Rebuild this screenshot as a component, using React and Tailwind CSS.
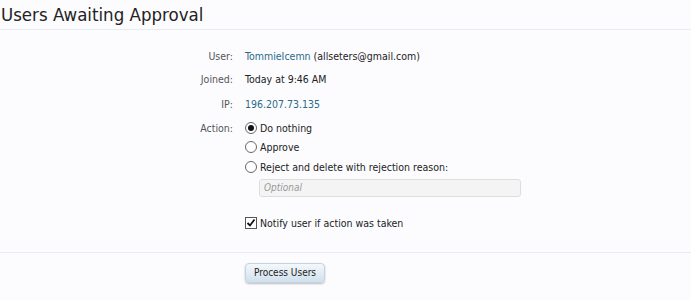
const font = { fontFamily: '"DejaVu Sans Condensed", "Liberation Sans", sans-serif' };

const Row = ({ label, children, className = "" }) => (
  <div className={`flex items-start ${className}`}>
    <div className="w-[245px] shrink-0 text-right pr-[12px] text-[#555]">{label}</div>
    <div className="flex-1 text-[#222]">{children}</div>
  </div>
);

const Radio = ({ checked }) => (
  <span className="inline-flex w-[12px] h-[12px] rounded-full border border-[#666] bg-white items-center justify-center mr-[3px] shrink-0">
    {checked && <span className="w-[6px] h-[6px] rounded-full bg-[#111]" />}
  </span>
);

export default function App() {
  return (
    <div className="w-[691px] h-[300px] bg-[#fcfcff] overflow-hidden text-[10.5px] leading-[14px]" style={font}>
      <h1 className="text-[18.5px] leading-[28px] text-[#222] pl-[1px] pt-[1px] border-b border-[#e6ecf2]">
        Users Awaiting Approval
      </h1>

      <div className="pt-[19px]">
        <Row label="User:">
          <span className="text-[#2b6a87]">TommieIcemn</span> (allseters@gmail.com)
        </Row>
        <Row label="Joined:" className="mt-[9px]">Today at 9:46 AM</Row>
        <Row label="IP:" className="mt-[11px]">
          <span className="text-[#2b6a87]">196.207.73.135</span>
        </Row>
        <Row label="Action:" className="mt-[10px]">
          <div className="flex flex-col">
            <label className="flex items-center h-[14px]"><Radio checked />Do nothing</label>
            <label className="flex items-center h-[14px] mt-[5px]"><Radio />Approve</label>
            <label className="flex items-center h-[14px] mt-[6px]"><Radio />Reject and delete with rejection reason:</label>
            <div className="ml-[14px] mt-[5px] w-[262px] h-[18px] bg-[#f4f4f4] border border-[#ddd] rounded-[3px] px-[4px] flex items-center italic text-[#999] text-[10px]">
              Optional
            </div>
            <label className="flex items-center h-[14px] mt-[19px]">
              <span className="w-[12px] h-[12px] border border-[#555] bg-white mr-[3px] flex items-center justify-center">
                <svg width="10" height="10" viewBox="0 0 10 10">
                  <path d="M1.5 5 L4 7.5 L8.5 1.5" stroke="#111" strokeWidth="1.8" fill="none" />
                </svg>
              </span>
              Notify user if action was taken
            </label>
          </div>
        </Row>
      </div>

      <div className="mt-[22px] border-t border-[#e6ecf2] pt-[10px] pl-[245px]">
        <button className="w-[80px] h-[20px] rounded-[4px] text-[10px] leading-[18px] text-[#222] border border-[#c4d4e0] bg-gradient-to-b from-[#f4f8fb] to-[#cfe0ec] shadow-[0_1px_2px_rgba(0,0,0,0.25)]">
          Process Users
        </button>
      </div>
    </div>
  );
}
